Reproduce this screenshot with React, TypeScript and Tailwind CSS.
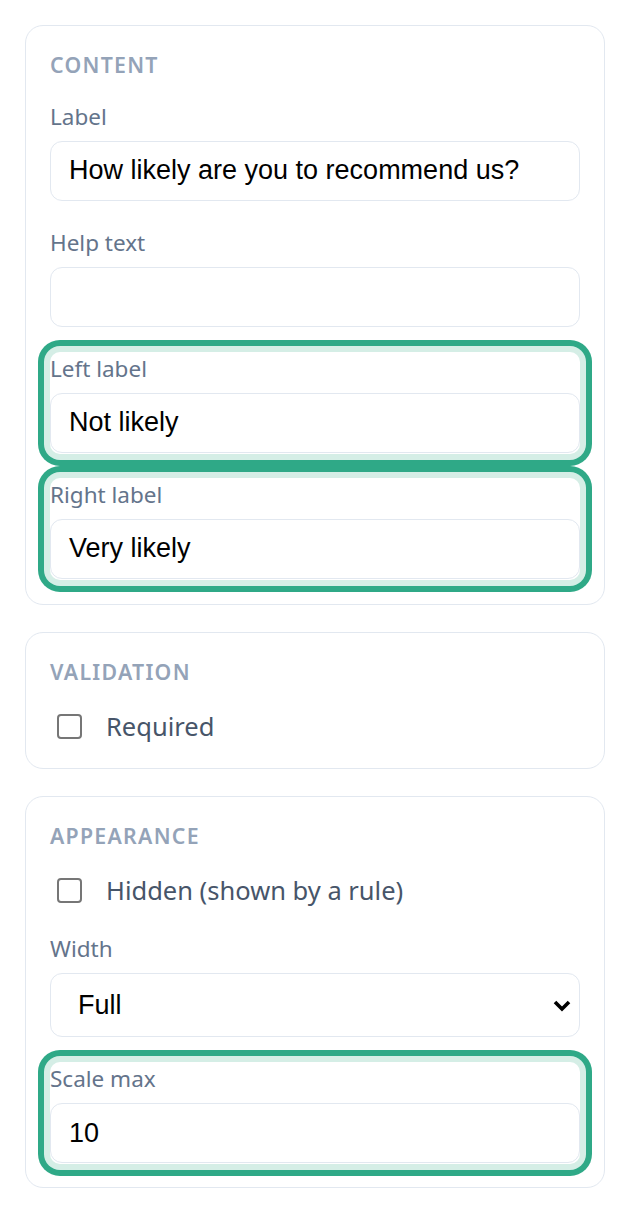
import React from "react";

const font = { fontFamily: '"Noto Sans", "Open Sans", sans-serif' };
const arial = { fontFamily: '"Liberation Sans", Arial, sans-serif' };

function Heading({ children }: { children: React.ReactNode }) {
  return (
    <div className="text-[21.3px] leading-[30px] font-semibold uppercase tracking-[0.06em] text-[#94a3b8] mb-[21.5px]">
      {children}
    </div>
  );
}

function Label({ children }: { children: React.ReactNode }) {
  return <div className="text-[22.5px] leading-[30px] text-[#64748b] mb-[9px]">{children}</div>;
}

function Field({
  label,
  value,
  highlight,
}: {
  label: string;
  value: string;
  highlight?: boolean;
}) {
  return (
    <div
      className={
        highlight
          ? "-mt-[2px] -mb-[1px] pt-[2px] pb-[1px] rounded-[10px] bg-white shadow-[0_0_0_6px_#d5eee6,0_0_0_12px_#2fa987]"
          : ""
      }
    >
      <Label>{label}</Label>
      <div className="h-[60px] rounded-[12px] border-[1.5px] border-[#e2e8f0] bg-white flex items-center px-[18px]">
        <span className="text-[27px] text-black" style={arial}>
          {value}
        </span>
      </div>
    </div>
  );
}

function Check({ label }: { label: string }) {
  return (
    <div className="h-[36px] flex items-center">
      <span className="ml-[7px] w-[25px] h-[25px] shrink-0 rounded-[4px] border-2 border-[#767676] bg-white" />
      <span className="ml-[24px] text-[25.5px] leading-[36px] text-[#475569]">{label}</span>
    </div>
  );
}

function Card({ children, extra }: { children: React.ReactNode; extra?: string }) {
  return (
    <div className={"rounded-[18px] border-[1.5px] border-[#e2e8f0] bg-white px-[24px] pt-[24px] " + (extra ?? "pb-[24px]")}>
      {children}
    </div>
  );
}

export default function App() {
  return (
    <div className="min-h-[1214px] bg-white pt-[25px] pl-[25px] pr-[25px]" style={font}>
      <div className="flex flex-col gap-[26.5px]">
        <Card extra="pb-[25.5px]">
          <Heading>Content</Heading>
          <div className="flex flex-col gap-[27px]">
            <Field label="Label" value="How likely are you to recommend us?" />
            <Field label="Help text" value="" />
            <Field label="Left label" value="Not likely" highlight />
            <Field label="Right label" value="Very likely" highlight />
          </div>
        </Card>
        <Card>
          <Heading>Validation</Heading>
          <Check label="Required" />
        </Card>
        <Card>
          <Heading>Appearance</Heading>
          <Check label="Hidden (shown by a rule)" />
          <div className="flex flex-col gap-[27px] mt-[26px]">
            <div>
              <Label>Width</Label>
              <div className="h-[64px] rounded-[12px] border-[1.5px] border-[#e2e8f0] bg-white flex items-center pl-[27px] pr-[8px]">
                <span className="flex-1 text-[27px] text-black" style={arial}>
                  Full
                </span>
                <svg width="18" height="13" viewBox="0 0 18 13">
                  <polyline
                    points="2,3 9,10 16,3"
                    fill="none"
                    stroke="black"
                    strokeWidth="3.6"
                    strokeLinecap="butt"
                    strokeLinejoin="miter"
                  />
                </svg>
              </div>
            </div>
            <Field label="Scale max" value="10" highlight />
          </div>
        </Card>
      </div>
    </div>
  );
}
